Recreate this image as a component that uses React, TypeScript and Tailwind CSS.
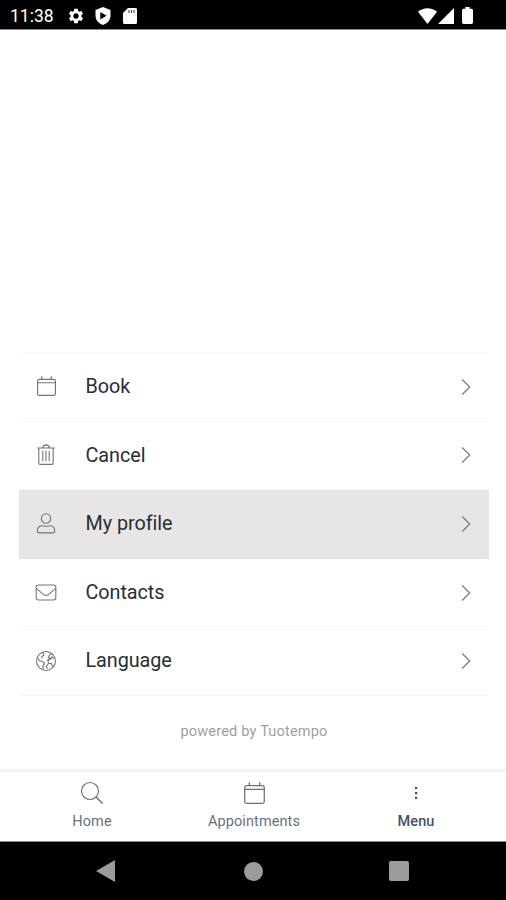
import type { ReactNode } from "react";

type IconProps = { className?: string };

function CalendarIcon({ className }: IconProps) {
  return (
    <svg viewBox="0 0 20 20" className={className} fill="none" stroke="currentColor" strokeWidth="1.1">
      <rect x="1.5" y="3.2" width="17" height="15.3" rx="1.6" />
      <path d="M1.5 6.400h17M5.500.2v3M14.500.2v3" />
    </svg>
  );
}

function TrashIcon({ className }: IconProps) {
  return (
    <svg viewBox="0 0 20 22" className={className} fill="none" stroke="currentColor" strokeWidth="1.1">
      <path d="M1.2 4h17.600M6.500 4C7.200-.2 12.800-.2 13.500 4M2.800 4v15c0 .9.6 1.400 1.400 1.400h11.600c.8 0 1.400-.5 1.400-1.400V4" />
      <path d="M6.800 6.800v10.500M10 6.800v10.500M13.200 6.800v10.500" />
    </svg>
  );
}

function UserIcon({ className }: IconProps) {
  return (
    <svg viewBox="0 0 20 22" className={className} fill="none" stroke="currentColor" strokeWidth="1.1">
      <circle cx="10" cy="5.500" r="4.700" />
      <path d="M1.300 17.700c0-3.200 2-5 4.900-5 1.500 0 2.300.5 3.800.5s2.300-.5 3.800-.5c2.900 0 4.900 1.800 4.900 5 0 1.500-.8 2.200-2.100 2.200H3.400c-1.300 0-2.100-.7-2.100-2.200z" />
    </svg>
  );
}

function EnvelopeIcon({ className }: IconProps) {
  return (
    <svg viewBox="0 0 22 18" className={className} fill="none" stroke="currentColor" strokeWidth="1.1">
      <rect x="1.200" y="1" width="19.600" height="15" rx="2.200" />
      <path d="M1.200 4.300l7.500 6.300c1.600 1.300 3 1.300 4.600 0l7.500-6.300" />
    </svg>
  );
}

function GlobeIcon({ className }: IconProps) {
  return (
    <svg viewBox="0 0 22 22" className={className} fill="none" stroke="currentColor" strokeWidth="1.1">
      <circle cx="11" cy="11" r="9.500" />
      <path d="M2.300 7.500l2.500 3.300 3.400 1.200 1.400 1.800-1.700 2.200.3 4M7.500 2.300l1.500 2.600-2.300 1.900.6 1.800M20 8l-3.700.2-3.500 2.600.8 2.400 2.900.4 1 3" />
      <path d="M16.800 3.700l-2 1.300-1.300 2.400 1.500 1.200 2.800-2.200M15 8.600l-2.500 1.200" />
      <path d="M13.500 13.500l-2.300 2.800 1.300 2.500" />
    </svg>
  );
}

function SearchIcon({ className }: IconProps) {
  return (
    <svg viewBox="0 0 24 24" className={className} fill="none" stroke="currentColor" strokeWidth="1.200">
      <circle cx="10" cy="10" r="8.500" />
      <path d="M16 16l6.700 6.500" strokeWidth="1.500" />
    </svg>
  );
}

function DotsIcon({ className }: IconProps) {
  return (
    <svg viewBox="0 0 24 24" className={className} fill="currentColor">
      <rect x="11" y="6" width="2.200" height="2.200" />
      <rect x="11" y="11" width="2.200" height="2.200" />
      <rect x="11" y="15.800" width="2.200" height="2.200" />
    </svg>
  );
}

function Chevron() {
  return (
    <svg viewBox="0 0 10 18" className="h-[18px] w-2.5 text-[#7d8082]" fill="none" stroke="currentColor" strokeWidth="1.300">
      <path d="M1.200 1.500l7.500 7.500-7.500 7.500" />
    </svg>
  );
}

const menuItems = [
  { label: "Book", icon: <CalendarIcon className="size-[21px]" /> },
  { label: "Cancel", icon: <TrashIcon className="h-[22px] w-5" /> },
  { label: "My profile", icon: <UserIcon className="h-[22px] w-5" />, active: true },
  { label: "Contacts", icon: <EnvelopeIcon className="h-[18px] w-[22px]" /> },
  { label: "Language", icon: <GlobeIcon className="size-[22px]" /> },
];

export default function App() {
  return (
    <div className="flex h-[900px] w-[506px] flex-col overflow-hidden bg-white font-[Roboto,sans-serif]">
      <StatusBar />

      <main className="flex flex-1 flex-col justify-end pr-[17px] pl-[19px]">
        <ul className="border-t border-[#f8f8f8]">
          {menuItems.map((item) => (
            <MenuRow key={item.label} {...item} />
          ))}
        </ul>
        <p className="flex h-[73px] items-center justify-center pb-0.5 text-[14.500px] tracking-[0.2px] text-[#9b9fa5]">
          powered by Tuotempo
        </p>
      </main>

      <nav className="flex h-[72px] shrink-0 border-t-[3px] border-[#f4f4f4] pr-[9px] pl-[11px]">
        <Tab label="Home" icon={<SearchIcon className="size-6" />} />
        <Tab label="Appointments" icon={<CalendarIcon className="size-[23px]" />} />
        <Tab label="Menu" icon={<DotsIcon className="size-6" />} active />
      </nav>

      <SystemBar />
    </div>
  );
}

function StatusBar() {
  return (
    <header className="flex h-[30px] shrink-0 items-center border-b border-[#8a8a8a] bg-black pt-0.5 pl-2.5 text-white">
      <span className="w-[57px] pt-px text-[17.500px]">11:38</span>
      <svg viewBox="0 0 24 24" className="size-[18px]" fill="currentColor">
        <path d="M19.140 12.940c.040-.3.060-.610.060-.940 0-.320-.020-.640-.070-.940l2.030-1.580a.490.490 0 0 0 .120-.610l-1.920-3.320a.488.488 0 0 0-.590-.220l-2.390.960c-.5-.380-1.030-.7-1.620-.940l-.360-2.540a.484.484 0 0 0-.480-.410h-3.840c-.240 0-.430.170-.470.410l-.360 2.540c-.590.240-1.130.570-1.620.940l-2.390-.960c-.220-.080-.470 0-.590.220L2.740 8.870c-.120.210-.080.470.120.610l2.030 1.580c-.050.3-.090.630-.090.940s.020.640.070.940l-2.030 1.580a.490.490 0 0 0-.120.610l1.920 3.320c.120.220.370.290.590.220l2.390-.960c.5.380 1.030.7 1.620.940l.360 2.540c.050.240.240.410.480.410h3.840c.240 0 .440-.170.470-.410l.360-2.540c.590-.240 1.130-.560 1.620-.940l2.390.960c.220.080.470 0 .590-.220l1.920-3.320c.120-.220.070-.470-.120-.610l-2.010-1.580zM12 15.600A3.610 3.610 0 0 1 8.400 12c0-1.980 1.620-3.600 3.600-3.600s3.600 1.620 3.600 3.600-1.620 3.600-3.600 3.600z" />
      </svg>
      <svg viewBox="0 0 16 18" className="ml-2.5 h-[18px] w-4" fill="currentColor" fillRule="evenodd">
        <path d="M8 0l7.500 3v5.500C15.500 13 12.500 16.500 8 18 3.500 16.500.5 13 .5 8.500V3zM5.300 5v7.600l6.200-3.800z" />
      </svg>
      <svg viewBox="0 0 14 16" className="ml-3 h-4 w-3.5">
        <path d="M5 0h7.500C13.400 0 14 .6 14 1.500v13c0 .9-.6 1.500-1.500 1.500h-11C.6 16 0 15.400 0 14.500V5z" fill="currentColor" />
        <path d="M6 2v3M8.500 2v3M11 2v3" stroke="#555" strokeWidth="1.200" />
      </svg>

      <div className="ml-auto flex items-center pr-[33px]">
        <svg viewBox="0 0 19 16" className="h-4 w-[19px]" fill="currentColor">
          <path d="M9.500 16L0 3.800C5.300-.9 13.700-.9 19 3.800z" />
        </svg>
        <svg viewBox="0 0 16 16" className="ml-px size-4" fill="currentColor">
          <path d="M16 0v16H0z" />
        </svg>
        <svg viewBox="0 0 11 17" className="ml-2 h-[17px] w-[11px]" fill="currentColor">
          <path d="M3.300 0h4.400v1.700h1.700c.9 0 1.600.7 1.600 1.600v12c0 1-.7 1.700-1.600 1.700H1.600C.7 17 0 16.300 0 15.300v-12c0-.9.7-1.600 1.600-1.600h1.700z" />
        </svg>
      </div>
    </header>
  );
}

function MenuRow({ label, icon, active }: { label: string; icon: ReactNode; active?: boolean }) {
  return (
    <li
      className={`flex h-[68.600px] items-center border-b pr-[18px] pl-4 ${
        active ? "border-[#e7e5e6] bg-[#e7e5e6]" : "border-[#f3f3f3]"
      }`}
    >
      <span className="flex w-[22px] justify-center text-[#737577]">{icon}</span>
      <span className="ml-[28.500px] flex-1 text-[19.800px] tracking-[-0.050px] text-[#2b2d33]">{label}</span>
      <Chevron />
    </li>
  );
}

function Tab({ label, icon, active }: { label: string; icon: ReactNode; active?: boolean }) {
  return (
    <button
      type="button"
      className={`flex flex-1 basis-0 flex-col items-center pt-[9px] text-[14.500px] ${
        active ? "font-medium text-[#45525f]" : "text-[#69727b]"
      }`}
    >
      <span className="flex h-6 items-center">{icon}</span>
      <span className="mt-[7px] leading-5 tracking-[0.100px]">{label}</span>
    </button>
  );
}

function SystemBar() {
  return (
    <footer className="flex h-[59px] shrink-0 items-center border-t border-[#8a8a8a] bg-black pl-24 text-[#9b9b9b]">
      <svg viewBox="0 0 19 22" className="h-[22px] w-[19px]" fill="currentColor">
        <path d="M19 0v22L0 11z" />
      </svg>
      <span className="ml-[129px] size-[19px] rounded-full bg-current" />
      <span className="ml-[126px] size-5 rounded-[2px] bg-current" />
    </footer>
  );
}
